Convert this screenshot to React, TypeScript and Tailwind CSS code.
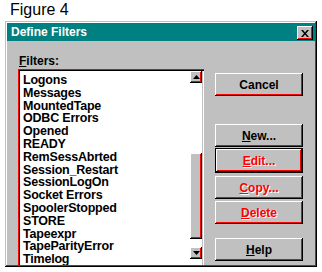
import type { ReactNode } from "react";

const filters = [
  "Logons",
  "Messages",
  "MountedTape",
  "ODBC Errors",
  "Opened",
  "READY",
  "RemSessAbrted",
  "Session_Restart",
  "SessionLogOn",
  "Socket Errors",
  "SpoolerStopped",
  "STORE",
  "Tapeexpr",
  "TapeParityError",
  "Timelog",
];

const raised =
  "shadow-[inset_-1px_-1px_0_#000,inset_1px_1px_0_#fff,inset_-2px_-2px_0_#ff0000]";

function Button({
  children,
  disabled = false,
  isDefault = false,
  className = "",
}: {
  children: ReactNode;
  disabled?: boolean;
  isDefault?: boolean;
  className?: string;
}) {
  return (
    <div
      className={`w-[88px] ${isDefault ? "h-[25px] border border-black" : "h-[23px]"} ${className}`}
    >
      <div
        className={`h-full w-full flex items-center justify-center bg-[#c0c0c0] text-[12px] font-bold ${raised} ${
          disabled ? "text-[#ff0000] [text-shadow:1px_1px_0_#fff]" : "text-black"
        }`}
      >
        {children}
      </div>
    </div>
  );
}

function Arrow({ up }: { up?: boolean }) {
  return (
    <div className={`h-[12px] w-[12px] flex items-center justify-center bg-[#c0c0c0] ${raised}`}>
      <svg width="7" height="4" viewBox="0 0 7 4">
        {up ? (
          <polygon points="3.5,0 7,4 0,4" fill="#000" />
        ) : (
          <polygon points="0,0 7,0 3.5,4" fill="#000" />
        )}
      </svg>
    </div>
  );
}

export default function App() {
  return (
    <div
      className="w-[322px] h-[272px] bg-white overflow-hidden"
      style={{ fontFamily: '"Liberation Sans", Arial, sans-serif' }}
    >
      <div className="pl-[10px] text-[16px] leading-[20px] text-black">Figure 4</div>

      <div className="mt-[1px] ml-[5px] w-[312px] h-[246px] p-[2px] bg-[#c0c0c0] shadow-[inset_-1px_-1px_0_#000,inset_1px_1px_0_#c0c0c0,inset_-2px_-2px_0_#ff0000,inset_2px_2px_0_#fff]">
        <div className="h-full flex flex-col overflow-hidden">
          {/* title bar */}
          <div className="h-[18px] shrink-0 bg-[#008080] flex items-center justify-between pl-[4px] pr-[2px]">
            <span className="text-white text-[12px] font-bold leading-none">Define Filters</span>
            <div className={`w-[16px] h-[14px] mt-[2px] flex items-center justify-center bg-[#c0c0c0] ${raised}`}>
              <svg width="8" height="7" viewBox="0 0 8 7">
                <path d="M0 0h2l2 2.5L6 0h2L5 3.5 8 7H6L4 4.5 2 7H0l3-3.5z" fill="#000" />
              </svg>
            </div>
          </div>

          {/* body */}
          <div className="flex flex-1 pl-[11px] gap-[11px]">
            <div className="w-[186px] pt-[13px] flex flex-col">
              <div className="pl-[1px] text-[12px] font-bold leading-[14px] text-black">
                <span className="underline">F</span>ilters:
              </div>
              <div className="mt-[1px] h-[220px] p-[2px] bg-white shadow-[inset_1px_1px_0_#ff0000,inset_2px_2px_0_#000,inset_-1px_-1px_0_#fff,inset_-2px_-2px_0_#c0c0c0]">
                <div className="flex h-full">
                  <div className="flex-1 pl-[3px] pt-[3px]">
                    {filters.map((f) => (
                      <div key={f} className="text-[12.5px] font-bold leading-[12.8px] tracking-[-0.2px] text-black whitespace-nowrap">
                        {f}
                      </div>
                    ))}
                  </div>
                  <div className="w-[12px] flex flex-col">
                    <Arrow up />
                    <div className="h-[164px] pt-[70px]">
                      <div className={`h-[86px] bg-[#c0c0c0] ${raised}`} />
                    </div>
                    <Arrow />
                  </div>
                </div>
              </div>
            </div>

            <div className="pt-[32px] flex flex-col">
              <Button>Cancel</Button>
              <Button className="mt-[28px]">
                <span className="underline">N</span>ew...
              </Button>
              <Button isDefault disabled className="mt-[1px]">
                <span className="underline">E</span>dit...
              </Button>
              <Button disabled className="mt-[3px]">
                <span className="underline">C</span>opy...
              </Button>
              <Button disabled className="mt-[2px]">
                <span className="underline">D</span>elete
              </Button>
              <Button className="mt-[14px]">
                <span className="underline">H</span>elp
              </Button>
            </div>
          </div>
        </div>
      </div>
    </div>
  );
}
